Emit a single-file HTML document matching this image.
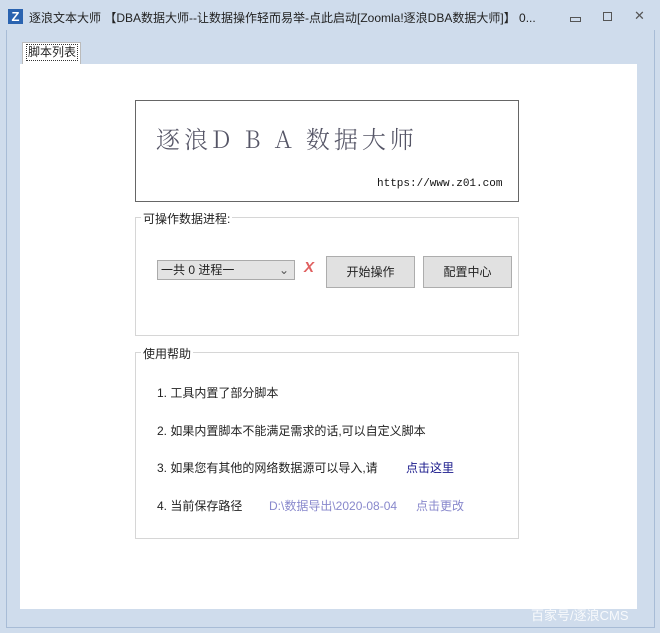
<!DOCTYPE html>
<html><head><meta charset="utf-8"><style>
body{margin:0;width:660px;height:633px;background:#cfdcec;position:relative;overflow:hidden;font-family:"Liberation Sans","Noto Sans CJK SC",sans-serif;font-size:12px;color:#222}
.a{position:absolute}
.grp{position:absolute;border:1px solid #d6d6d6}
.lbl{position:absolute;background:#fff;padding:0 2px;font-size:12px}
.btn{position:absolute;background:#e1e1e1;border:1px solid #adadad;text-align:center;font-size:12px;box-sizing:border-box}
.ln{position:absolute;left:157px;font-size:12px}
</style></head><body>
<div class="a" style="left:0;top:0;width:660px;height:33px;background:#cfdcec"></div>
<div class="a" style="left:8px;top:9px;width:15px;height:15px;background:#2a63b0;color:#fff;font-weight:bold;font-size:13px;line-height:15px;text-align:center">Z</div>
<div class="a" style="left:29px;top:9px;font-size:12px;color:#222;white-space:nowrap">逐浪文本大师 【DBA数据大师--让数据操作轻而易举-点此启动[Zoomla!逐浪DBA数据大师]】 0...</div>
<div class="a" style="left:570px;top:17px;width:9px;height:3px;border:1px solid #555"></div>
<div class="a" style="left:603px;top:12px;width:7px;height:7px;border:1px solid #555"></div>
<div class="a" style="left:634px;top:8px;font-size:13px;color:#555">✕</div>
<div class="a" style="left:6px;top:30px;width:647px;height:597px;border:1px solid #a8bcd6;border-top:none"></div>
<div class="a" style="left:22px;top:42px;width:57px;height:23px;background:#fff;border:1px solid #bbb;border-bottom:none"></div>
<div class="a" style="left:26px;top:44px;border:1px dotted #333;padding:0 1px;font-size:12px;line-height:15px">脚本列表</div>
<div class="a" style="left:20px;top:64px;width:617px;height:545px;background:#fff"></div>
<div class="a" style="left:135px;top:100px;width:382px;height:100px;border:1px solid #666;background:#fff"></div>
<div class="a" style="left:156px;top:120px;font-family:'Noto Serif CJK SC',serif;font-size:24px;font-weight:300;color:#556;letter-spacing:4px;white-space:nowrap">逐浪D B A 数据大师</div>
<div class="a" style="left:377px;top:178px;font-family:'Liberation Mono',monospace;font-size:11px;color:#111">https://www.z01.com</div>
<div class="grp" style="left:135px;top:217px;width:382px;height:117px"></div>
<div class="lbl" style="left:141px;top:210px">可操作数据进程:</div>
<div class="a" style="left:157px;top:260px;width:136px;height:18px;background:#e3e3e3;border:1px solid #aaa;font-size:12px;line-height:18px;padding-left:3px;box-sizing:border-box;width:138px;height:20px">一共 0 进程一<span style="position:absolute;right:5px;top:0;color:#555">⌄</span></div>
<div class="a" style="left:304px;top:259px;color:#e06060;font-weight:bold;font-style:italic;font-size:15px">X</div>
<div class="btn" style="left:326px;top:256px;width:89px;height:32px;line-height:30px">开始操作</div>
<div class="btn" style="left:423px;top:256px;width:89px;height:32px;line-height:30px">配置中心</div>
<div class="grp" style="left:135px;top:352px;width:382px;height:185px"></div>
<div class="lbl" style="left:141px;top:345px">使用帮助</div>
<div class="ln" style="top:384px">1. 工具内置了部分脚本</div>
<div class="ln" style="top:422px">2. 如果内置脚本不能满足需求的话,可以自定义脚本</div>
<div class="ln" style="top:459px">3. 如果您有其他的网络数据源可以导入,请</div>
<div class="a" style="left:406px;top:459px;color:#1a1a8c">点击这里</div>
<div class="ln" style="top:497px">4. 当前保存路径</div>
<div class="a" style="left:269px;top:497px;color:#8888cc">D:\数据导出\2020-08-04</div>
<div class="a" style="left:416px;top:497px;color:#8888cc">点击更改</div>
<div class="a" style="left:531px;top:605px;color:#fff;font-size:13px;opacity:.85">百家号/逐浪CMS</div>
</body></html>
